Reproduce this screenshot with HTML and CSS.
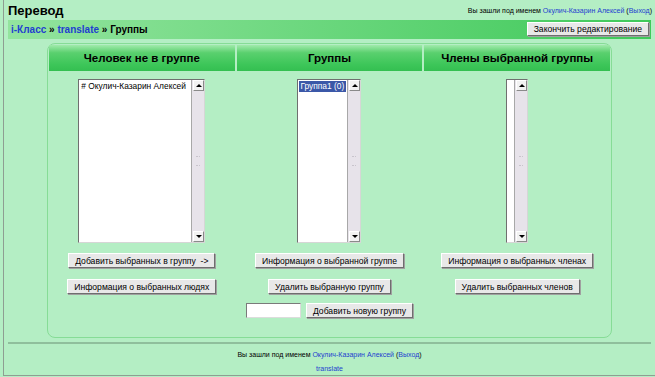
FILE: index.html
```html
<!DOCTYPE html>
<html>
<head>
	<title>Перевод</title>
	<link rel="stylesheet" href="styles.css">
</head>
<body>
	<div class="page">
		<div class="header">
			<h1 class="title">Перевод</h1>
			<div class="login">Вы зашли под именем <a href="#">Окулич-Казарин Алексей</a> (<a href="#">Выход</a>)</div>
		</div>

		<div class="navbar">
			<div class="crumbs"><a href="#">i-Класс</a> » <a href="#">translate</a> » Группы</div>
			<button class="btn btn-edit">Закончить редактирование</button>
		</div>

		<div class="panel">
			<div class="cols">
				<div class="col-head">Человек не в группе</div>
				<div class="col-head">Группы</div>
				<div class="col-head">Члены выбранной группы</div>

				<!-- list boxes -->
				<div class="listbox list-people">
					<div class="list-items">
						<div class="item"># Окулич-Казарин Алексей</div>
					</div>
					<div class="scroll">
						<span class="arrow up"></span>
						<span class="grip"></span>
						<span class="arrow down"></span>
					</div>
				</div>
				<div class="listbox list-groups">
					<div class="list-items">
						<div class="item selected">Группа1 (0)</div>
					</div>
					<div class="scroll">
						<span class="arrow up"></span>
						<span class="grip"></span>
						<span class="arrow down"></span>
					</div>
				</div>
				<div class="listbox list-members">
					<div class="list-items"></div>
					<div class="scroll">
						<span class="arrow up"></span>
						<span class="grip"></span>
						<span class="arrow down"></span>
					</div>
				</div>

				<button class="btn row-first">Добавить выбранных в группу &nbsp;-&gt;</button>
				<button class="btn row-first">Информация о выбранной группе</button>
				<button class="btn row-first">Информация о выбранных членах</button>

				<button class="btn row-second">Информация о выбранных людях</button>
				<button class="btn row-second">Удалить выбранную группу</button>
				<button class="btn row-second">Удалить выбранных членов</button>
			</div>

			<div class="add-row">
				<input type="text" class="group-name">
				<button class="btn">Добавить новую группу</button>
			</div>
		</div>

		<div class="footer">
			<div class="footer-login">Вы зашли под именем <a href="#">Окулич-Казарин Алексей</a> (<a href="#">Выход</a>)</div>
			<div class="footer-link"><a href="#">translate</a></div>
		</div>
	</div>
</body>
</html>
```

FILE: styles.css
```css
body {
	margin: 0;
	background: #b4eec4;
	font-family: "Liberation Sans", Arial, sans-serif;
	color: #000;
}
a {
	color: #1f3fd0;
	text-decoration: none;
}
.page {
	margin-left: 3px;
	height: 376px;
	box-sizing: border-box;
	padding: 0 4px;
	border-left: 1px solid #8e9e92;
	border-bottom: 1px solid #8e9e92;
}

/* header */
.header {
	display: flex;
	justify-content: space-between;
	align-items: flex-start;
	padding-top: 3px;
	height: 17px;
}
.title {
	margin: 0;
	font-size: 13px;
	line-height: 16px;
	font-weight: bold;
}
.login {
	font-size: 7px;
	margin-top: 4px;
	margin-right: -1px;
}

/* navigation bar */
.navbar {
	display: flex;
	justify-content: space-between;
	align-items: center;
	height: 19px;
	padding: 0 2px 0 3px;
	background: linear-gradient(to right, #93e49e, #3fc95a);
}
.crumbs {
	font-size: 10px;
	font-weight: bold;
}

/* buttons */
.btn {
	font: 8.6px "Liberation Sans", Arial, sans-serif;
	color: #000;
	height: 15px;
	padding: 0 6px;
	background: #e8e8e8;
	border: 1px solid;
	border-color: #ffffff #6e6e6e #6e6e6e #ffffff;
	box-shadow: 1px 1px 0 #a0a0a0;
}
.btn-edit {
	height: 14px;
	padding: 0 6px;
	margin-top: -2px;
}

/* main panel */
.panel {
	width: 565px;
	box-sizing: border-box;
	margin: 4px auto 0;
	padding: 1px;
	border: 1px solid #86dc96;
	border-radius: 8px;
}
.cols {
	display: grid;
	grid-template-columns: repeat(3, 1fr);
	column-gap: 2px;
	justify-items: center;
}
.col-head {
	justify-self: stretch;
	height: 26px;
	display: flex;
	align-items: center;
	justify-content: center;
	font-size: 11.5px;
	font-weight: bold;
	background: linear-gradient(#a0eaab, #5ad06e 30%, #3dc659 75%, #34bf51);
}

/* list boxes */
.listbox {
	display: flex;
	margin-top: 8px;
	height: 164px;
	box-sizing: border-box;
	background: #fff;
	border: 1px solid;
	border-color: #6f6f6f #d6d6d6 #d6d6d6 #6f6f6f;
}
.list-people { width: 127px; }
.list-groups { width: 64px; }
.list-members { width: 22px; }
.list-items {
	flex: 1;
	font-size: 8.4px;
	padding: 1px;
	overflow: hidden;
}
.item {
	white-space: nowrap;
	padding: 0 1px;
	line-height: 11px;
}
.item.selected {
	background: #3b58a8;
	color: #fff;
}
.scroll {
	width: 12px;
	display: flex;
	flex-direction: column;
	justify-content: space-between;
	align-items: center;
	background: #e7e3ea;
	border-left: 1px solid #a8a8a8;
}
.arrow {
	width: 11px;
	height: 11px;
	box-sizing: border-box;
	background: #f2f2f2;
	border: 1px solid;
	border-color: #fff #8a8a8a #8a8a8a #fff;
	position: relative;
}
.arrow::after {
	content: "";
	position: absolute;
	left: 2px;
	top: 3px;
	border-left: 3px solid transparent;
	border-right: 3px solid transparent;
}
.arrow.up::after {
	border-bottom: 3px solid #000;
}
.arrow.down::after {
	border-top: 3px solid #000;
}
.grip {
	width: 4px;
	height: 8px;
	border-top: 1px dotted #c8c4cc;
	border-bottom: 1px dotted #c8c4cc;
}

.row-first {
	margin-top: 10px;
}
.row-second {
	margin-top: 11px;
}

/* add group row */
.add-row {
	display: flex;
	justify-content: center;
	align-items: center;
	gap: 5px;
	margin-top: 9px;
	padding-bottom: 18px;
}
.group-name {
	width: 55px;
	height: 15px;
	box-sizing: border-box;
	padding: 0;
	background: #fff;
	border: 1px solid;
	border-color: #7a7a7a #dcdcdc #dcdcdc #7a7a7a;
}

/* footer */
.footer {
	margin-top: 4px;
	border-top: 2px solid #8fbf9c;
	text-align: center;
	font-size: 7px;
	padding-top: 7px;
}
.footer-link {
	margin-top: 7px;
}
```
